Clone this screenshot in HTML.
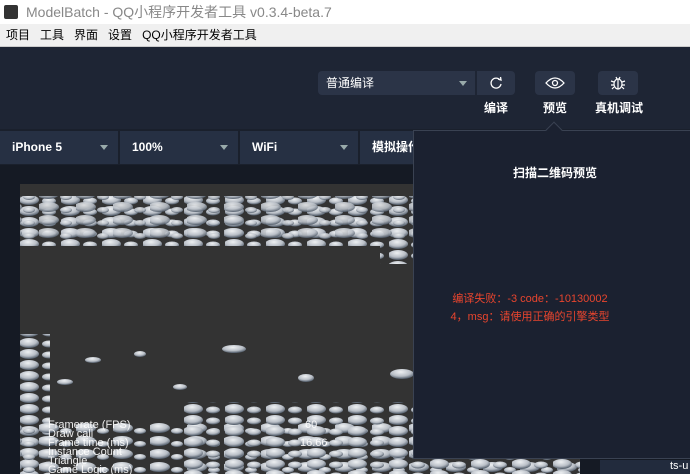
<!DOCTYPE html>
<html><head><meta charset="utf-8"><style>
*{margin:0;padding:0;box-sizing:border-box}
body{width:690px;height:474px;overflow:hidden;background:#151a24;font-family:"Liberation Sans","Noto Sans CJK SC",sans-serif;position:relative}
.abs{position:absolute}
.title{left:0;top:0;width:690px;height:24px;background:#fff;color:#888;font-size:14px;line-height:24px;padding-left:26px}
.menu{left:0;top:24px;width:690px;height:23px;background:#f0f0f0;font-size:12px;line-height:22px;color:#000;border-bottom:1px solid #ccc}
.menu span{margin-left:6px;margin-right:4px}
.tb{left:0;top:47px;width:690px;height:82px;background:#1e2534}
.btn{background:#2b3447;border-radius:4px}
.lbl{color:#fff;font-size:12px;font-weight:bold}
.bar{left:0;top:129px;width:690px;height:36px;background:#1a202c}
.sel{top:131px;height:33px;background:#263043;color:#fff;font-size:12px;font-weight:bold;line-height:33px;padding-left:12px}
.tri{position:absolute;right:10px;top:14px;border:4px solid transparent;border-top:5px solid #9aa;border-bottom:0}
</style></head><body>
<div class="abs title"><div class="abs" style="left:4px;top:5px;width:14px;height:14px;background:#333;border-radius:2px"></div>ModelBatch - QQ小程序开发者工具 v0.3.4-beta.7</div>
<div class="abs menu"><span>项目</span><span>工具</span><span>界面</span><span>设置</span><span>QQ小程序开发者工具</span></div>
<div class="abs tb"></div>
<div class="abs btn" style="left:318px;top:71px;width:157px;height:24px;border-radius:4px 0 0 4px;color:#fff;font-size:12px;line-height:24px;padding-left:8px">普通编译<div class="tri" style="top:10px;right:8px"></div></div>
<div class="abs btn" style="left:477px;top:71px;width:38px;height:24px;border-radius:0 4px 4px 0"><svg class="abs" style="left:12px;top:5px" width="14" height="14" viewBox="0 0 14 14"><path d="M11 4A5 5 0 1 0 12 8" fill="none" stroke="#fff" stroke-width="1.3"/><path d="M9 3L12 4L11.5 1" fill="none" stroke="#fff" stroke-width="1.3"/></svg></div>
<div class="abs lbl" style="left:484px;top:99px">编译</div>
<div class="abs btn" style="left:535px;top:71px;width:40px;height:24px"><svg class="abs" style="left:10px;top:5px" width="20" height="14" viewBox="0 0 20 14"><path d="M1 7Q10 -3 19 7Q10 17 1 7Z" fill="none" stroke="#fff" stroke-width="1.3"/><circle cx="10" cy="7" r="2.5" fill="none" stroke="#fff" stroke-width="1.3"/></svg></div>
<div class="abs lbl" style="left:543px;top:99px">预览</div>
<div class="abs btn" style="left:598px;top:71px;width:40px;height:24px"><svg class="abs" style="left:12px;top:4px" width="16" height="16" viewBox="0 0 16 16"><ellipse cx="8" cy="9" rx="4" ry="5" fill="none" stroke="#fff" stroke-width="1.2"/><path d="M8 4V14M1 6L4 7M1 10H4M2 14L4 12M15 6L12 7M15 10H12M14 14L12 12M6 2L7 4M10 2L9 4" stroke="#fff" stroke-width="1.2"/></svg></div>
<div class="abs lbl" style="left:595px;top:99px">真机调试</div>
<div class="abs bar"></div>
<div class="abs sel" style="left:0;width:118px">iPhone 5<div class="tri"></div></div>
<div class="abs sel" style="left:120px;width:118px">100%<div class="tri"></div></div>
<div class="abs sel" style="left:240px;width:118px">WiFi<div class="tri"></div></div>
<div class="abs sel" style="left:360px;width:60px">模拟操作</div>
<svg class="abs" style="left:20px;top:184px" width="560" height="290" viewBox="0 0 560 290">
<defs><radialGradient id="g" cx="0.45" cy="0.3" r="0.7"><stop offset="0" stop-color="#eef0f2"/><stop offset="0.6" stop-color="#b8bec6"/><stop offset="1" stop-color="#4a5563"/></radialGradient>
<pattern id="p" width="41" height="11" patternUnits="userSpaceOnUse"><ellipse cx="9" cy="5" rx="10" ry="5" fill="url(#g)"/><ellipse cx="29" cy="6" rx="7" ry="3.5" fill="url(#g)"/></pattern>
<pattern id="q" width="37" height="13" patternUnits="userSpaceOnUse" patternTransform="translate(19 5)"><ellipse cx="9" cy="5" rx="11" ry="5" fill="url(#g)"/><ellipse cx="27" cy="8" rx="6" ry="3" fill="url(#g)"/></pattern></defs>
<rect width="560" height="290" fill="#333"/>
<rect x="0" y="12" width="560" height="50" fill="url(#p)"/><rect x="0" y="12" width="560" height="44" fill="url(#q)" opacity="0.9"/>
<rect x="360" y="58" width="200" height="22" fill="url(#p)"/>
<ellipse cx="214" cy="165" rx="12" ry="4" fill="url(#g)"/><ellipse cx="73" cy="176" rx="8" ry="3" fill="url(#g)"/><ellipse cx="120" cy="170" rx="6" ry="3" fill="url(#g)"/><ellipse cx="382" cy="190" rx="12" ry="5" fill="url(#g)"/><ellipse cx="286" cy="194" rx="8" ry="4" fill="url(#g)"/><ellipse cx="45" cy="198" rx="8" ry="3" fill="url(#g)"/><ellipse cx="160" cy="203" rx="7" ry="3" fill="url(#g)"/>
<rect x="0" y="150" width="30" height="140" fill="url(#p)"/>
<rect x="0" y="238" width="560" height="52" fill="url(#q)"/><rect x="160" y="218" width="400" height="72" fill="url(#p)"/>
<g fill="#fff" font-size="11" font-family="Liberation Sans,sans-serif" opacity="0.9"><text x="28" y="244">Framerate (FPS)</text><text x="285" y="244">60</text><text x="28" y="253">Draw call</text><text x="28" y="262">Frame time (ms)</text><text x="280" y="262">16.66</text><text x="28" y="271">Instance Count</text><text x="28" y="280">Triangle</text><text x="28" y="289">Game Logic (ms)</text></g>
</svg>
<div class="abs" style="left:600px;top:460px;width:90px;height:14px;background:#222b3d;color:#fff;font-size:11px;padding-left:70px">ts-u</div>
<div class="abs" style="left:413px;top:130px;width:280px;height:329px;background:#1b2130;border:1px solid #3a4252"></div>
<div class="abs" style="left:548px;top:124px;width:12px;height:12px;background:#1b2130;border-left:1px solid #3a4252;border-top:1px solid #3a4252;transform:rotate(45deg)"></div>
<div class="abs" style="left:455px;top:164px;width:200px;text-align:center;color:#fff;font-size:12px;font-weight:bold">扫描二维码预览</div>
<div class="abs" style="left:430px;top:290px;width:200px;color:#e8452e;font-size:11px;line-height:18px;text-align:center">编译失败：-3 code：-10130002<br>4，msg：请使用正确的引擎类型</div>
</body></html>
